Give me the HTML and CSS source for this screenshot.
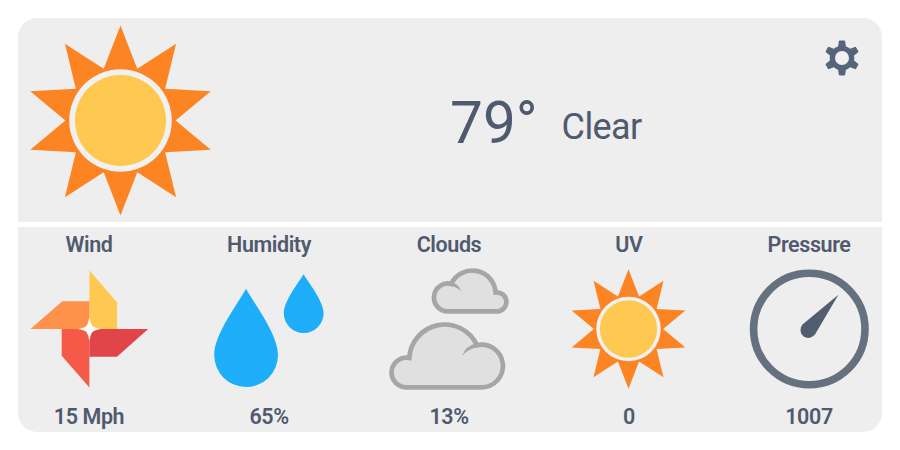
FILE: index.html
```
<!DOCTYPE html>
<html lang="en">
<head>
<meta charset="utf-8">
<title>Weather</title>
<link rel="stylesheet" href="styles.css">
</head>
<body>
<svg class="defs" width="0" height="0" aria-hidden="true">
  <symbol id="sun" viewBox="-95 -95 190 190">
    <path fill="#fd8423" d="M0-94.5 16.7-51.5 55.3-76.3 44.4-31.7 89.8-29.2 54.8 0 89.8 29.2 44.4 31.7 55.3 76.3 16.7 51.5 0 94.5-16.7 51.5-55.3 76.3-44.4 31.7-89.8 29.2-54.8 0-89.8-29.2-44.4-31.7-55.3-76.3-16.7-51.5Z"/>
    <circle r="51" fill="#f1f1f2"/>
    <circle r="45.3" fill="#ffc850"/>
  </symbol>
  <symbol id="tooth" viewBox="-18 -18 36 36">
    <path d="M-4.2-9-3.2-16.5Q-3-17.6-2-17.6H2Q3-17.6 3.2-16.5L4.2-9Z"/>
  </symbol>
</svg>
<main class="widget">
  <section class="current">
    <svg class="current-icon"><use href="#sun"/></svg>
    <div class="reading"><span class="temp">79°</span><span class="condition">Clear</span></div>
    <svg class="settings" viewBox="-18 -18 36 36">
      <g fill="#566579">
        <use href="#tooth" x="-18" y="-18" width="36" height="36"/>
        <use href="#tooth" x="-18" y="-18" width="36" height="36" transform="rotate(60)"/>
        <use href="#tooth" x="-18" y="-18" width="36" height="36" transform="rotate(120)"/>
        <use href="#tooth" x="-18" y="-18" width="36" height="36" transform="rotate(180)"/>
        <use href="#tooth" x="-18" y="-18" width="36" height="36" transform="rotate(240)"/>
        <use href="#tooth" x="-18" y="-18" width="36" height="36" transform="rotate(300)"/>
        <circle r="12.3"/>
      </g>
      <circle r="7" fill="#f1f1f2"/>
    </svg>
  </section>
  <section class="stats">
    <div class="stat">
      <h2 class="label">Wind</h2>
      <svg class="icon" viewBox="29 267 120 124">
        <path fill="#ffc850" d="M89.4 270.5 117 302.3V329H89.4Z"/>
        <path fill="#ff924a" d="M30.5 329 62.3 301.3H89.4V329Z"/>
        <path fill="#f55a48" d="M61.7 329H89.4V387.5L61.7 355.7Z"/>
        <path fill="#e24549" d="M89.4 329H148.2L117 356.8H89.4Z"/>
        <path fill="#fff" d="M89.4 317.3Q90.6 323.5 92.4 326 95 328 101 329 95 330 92.4 332 90.6 334.5 89.4 341 88.2 334.5 86.4 332 84 330 77.8 329 84 328 86.4 326 88.2 323.5 89.4 317.3Z"/>
      </svg>
      <span class="value">15 Mph</span>
    </div>
    <div class="stat">
      <h2 class="label">Humidity</h2>
      <svg class="icon" viewBox="209 267 120 124">
        <path fill="#1eaef9" d="M246 288.8C253 302 278 334 278 355A31.9 32 0 0 1 214.2 355C214.2 334 239 302 246 288.8Z"/>
        <path fill="#1eaef9" d="M303.6 274.3C308 282 323.6 301 323.6 313.2A19.9 19.8 0 0 1 283.8 313.2C283.8 301 299 282 303.6 274.3Z"/>
      </svg>
      <span class="value">65%</span>
    </div>
    <div class="stat">
      <h2 class="label">Clouds</h2>
      <svg class="icon" viewBox="389 267 120 124">
        <g fill="#e0e0e0" stroke="#a6a6a6" stroke-width="4.7">
          <path d="M448.5 311.3A13.9 13.9 0 1 1 451.1 283.9 23.4 23.4 0 0 1 495.6 292.4 9.5 9.5 0 1 1 497.2 311.3Z"/>
          <path d="M406.2 387.3A14.8 14.8 0 1 1 409.3 358 35.5 35.5 0 0 1 477 345.2 21.3 21.3 0 1 1 481.6 387.3Z"/>
        </g>
        <path fill="#a6a6a6" d="M450 281.5Q459 283.5 461.2 291.8 457 286.5 450 286.1Z"/>
        <path fill="#a6a6a6" d="M478 342.9Q465 345.5 462.2 356 468.5 348.5 478 347.3Z"/>
      </svg>
      <span class="value">13%</span>
    </div>
    <div class="stat">
      <h2 class="label">UV</h2>
      <svg class="icon" viewBox="569 267 120 124"><use href="#sun" x="568.4" y="268.9" width="120.2" height="120.2"/></svg>
      <span class="value">0</span>
    </div>
    <div class="stat">
      <h2 class="label">Pressure</h2>
      <svg class="icon" viewBox="749 267 120 124">
        <circle cx="809.3" cy="329" r="55.7" fill="none" stroke="#65717f" stroke-width="7.6"/>
        <path fill="#535d70" d="M838.4 294.8 815.3 334.1A8 8 0 1 1 802.8 324.3Z"/>
      </svg>
      <span class="value">1007</span>
    </div>
  </section>
</main>
</body>
</html>
```
FILE: styles.css
```
* { box-sizing: border-box; }
body {
  margin: 0;
  background: #fff;
  color: #505a6e;
  font-family: Roboto, "Liberation Sans", sans-serif;
}
.defs { display: block; }
.widget {
  width: 864px;
  height: 414px;
  margin: 18px;
  display: flex;
  flex-direction: column;
  gap: 5px;
  border-radius: 19px;
  overflow: hidden;
}
.current {
  height: 204px;
  background: #eee;
  display: flex;
  align-items: flex-start;
  padding: 7px 22px 0 7px;
}
.current-icon { width: 191px; height: 191px; }
.reading {
  display: flex;
  align-items: flex-start;
  gap: 24px;
  padding-top: 64px;
  margin-left: 234px;
}
.temp {
  font-size: 58.5px;
  line-height: 68px;
  font-weight: 400;
}
.condition {
  font-size: 36px;
  line-height: 42px;
  padding-top: 17px;
  font-weight: 400;
  letter-spacing: -0.6px;
}
.settings {
  width: 36px;
  height: 36px;
  margin: 15px 0 0 auto;
}
.stats {
  height: 205px;
  background: #eee;
  display: grid;
  grid-template-columns: repeat(5, 120px);
  column-gap: 60px;
  padding: 4px 0 0 11px;
}
.stat {
  display: flex;
  flex-direction: column;
  align-items: center;
}
.label, .value {
  margin: 0;
  font-size: 21.5px;
  line-height: 28px;
  font-weight: 600;
  letter-spacing: -0.4px;
  white-space: nowrap;
}
.icon {
  width: 120px;
  height: 124px;
  margin: 8px 0 12px;
}
```
